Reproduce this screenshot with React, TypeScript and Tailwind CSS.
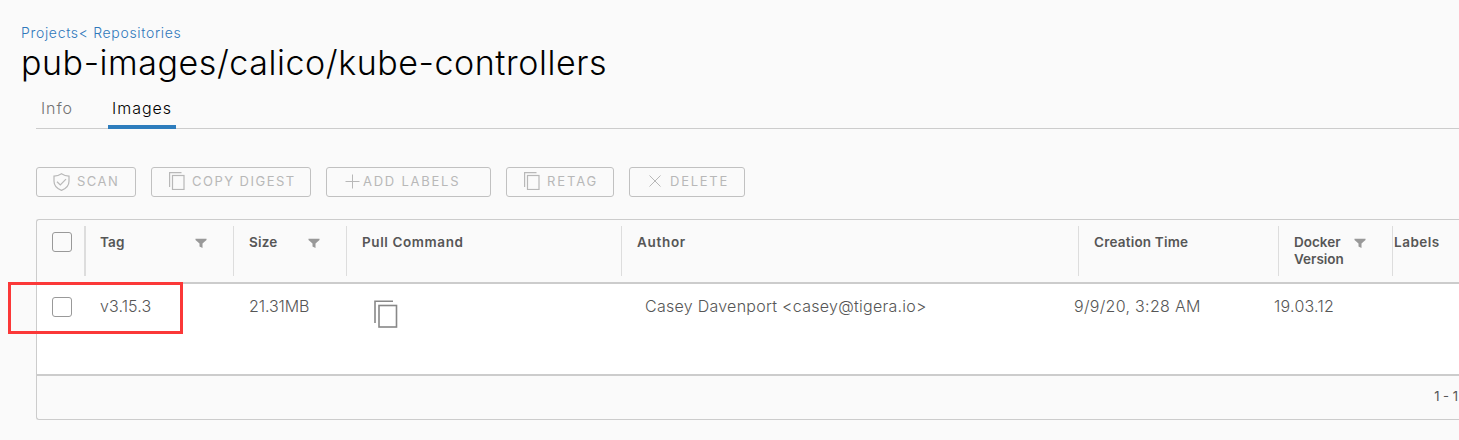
import type { ReactNode } from "react";

function CopyIcon({ className }: { className: string }) {
  return (
    <svg className={className} viewBox="0 0 16 18" fill="none" stroke="currentColor" strokeWidth="1.2">
      <path d="M0.6 15V0.6H12.5" />
      <rect x="3.5" y="3.5" width="11.5" height="14" />
    </svg>
  );
}

function ShieldIcon() {
  return (
    <svg className="-mt-px h-[18px] w-[17px] shrink-0" viewBox="0 0 17 18" fill="none" stroke="currentColor" strokeWidth="1.2">
      <path d="M8.5 0.7C6.3 2.2 3.8 3 1 3.1V8.3C1 12.6 4.2 15.8 8.5 17.4C12.8 15.8 16 12.6 16 8.3V3.1C13.2 3 10.7 2.2 8.5 0.7Z" />
      <path d="M4 8.7L7.3 11.9L13 6.2" />
    </svg>
  );
}

function FilterIcon() {
  return (
    <svg className="mt-[4px] h-[10px] w-[12px] shrink-0" viewBox="0 0 12 10" fill="#999">
      <path d="M0.5 0.8H11.5V1.9L7.5 5.4V10L4.5 8.4V5.4L0.5 1.9Z" />
    </svg>
  );
}

function ToolButton({ className, children }: { className: string; children: ReactNode }) {
  return (
    <button
      className={`flex h-[30px] shrink-0 items-center rounded-[3px] border border-[#c1c1c1] text-[13px] whitespace-nowrap text-[#b8b8b8] ${className}`}
    >
      {children}
    </button>
  );
}

function Checkbox() {
  return <span className="block h-5 w-5 shrink-0 rounded-[3px] border border-[#999]" />;
}

function HeaderCell({ className, children }: { className: string; children?: ReactNode }) {
  return (
    <div className={`flex h-[50px] shrink-0 pt-[8px] text-[13.5px] leading-[17px] font-semibold ${className}`}>
      {children}
    </div>
  );
}

export default function App() {
  return (
    <div className="relative h-[440px] w-full overflow-hidden bg-[#fafafa] font-['Inter',sans-serif] text-[#565656]">
      <nav className="mt-6 flex h-[18px] items-center pl-[21px] text-[14px] leading-[18px] font-light tracking-[0.67px] text-[#2f78bb]">
        <a className="whitespace-pre">Projects&lt; Repositories</a>
      </nav>
      <h1 className="h-[44px] pl-[21px] text-[34px] leading-[42px] font-light tracking-[0.56px] whitespace-nowrap text-black">
        pub-images/calico/kube-controllers
      </h1>
      <div className="ml-9 flex h-[43px] shadow-[inset_0_-1px_0_#ccc]">
        <div className="w-[72px] pt-[10px] pl-[5px] text-[16px] leading-[24px] font-light tracking-[0.9px] text-[#737373]">Info</div>
        <div className="w-[68px] border-b-4 border-[#2d7dbd] pt-[10px] pl-[4px] text-[16px] leading-[24px] font-light tracking-[1px] whitespace-nowrap text-black">
          Images
        </div>
      </div>

      <div className="mt-[38px] ml-9 flex gap-[15px]">
        <ToolButton className="w-[100px] pl-[16px]">
          <ShieldIcon />
          <span className="ml-[7px] tracking-[1.5px]">SCAN</span>
        </ToolButton>
        <ToolButton className="w-[160px] pl-[17px]">
          <CopyIcon className="-mt-[2px] h-[18px] w-4 shrink-0" />
          <span className="ml-[7px] tracking-[1.48px]">COPY DIGEST</span>
        </ToolButton>
        <ToolButton className="w-[165px] pl-[18px]">
          <svg className="-mt-[2px] h-[15px] w-[15px] shrink-0" viewBox="0 0 15 15" stroke="currentColor" fill="none">
            <path d="M7.5 0.5V14.5M0.5 7.5H14.5" />
          </svg>
          <span className="ml-[3px] tracking-[1.75px]">ADD LABELS</span>
        </ToolButton>
        <ToolButton className="w-[108px] pl-[17px]">
          <CopyIcon className="-mt-[2px] h-[18px] w-4 shrink-0" />
          <span className="ml-[7px] tracking-[1.9px]">RETAG</span>
        </ToolButton>
        <ToolButton className="w-[116px] pl-[19px]">
          <svg className="-mt-[2px] h-3 w-3 shrink-0" viewBox="0 0 12 12" stroke="currentColor" fill="none">
            <path d="M0.5 0.5L11.5 11.5M11.5 0.5L0.5 11.5" />
          </svg>
          <span className="ml-[9px] tracking-[1.75px]">DELETE</span>
        </ToolButton>
      </div>

      <div className="mt-[22px] ml-9 h-[201px] overflow-hidden rounded-l-[3px] border border-r-0 border-[#ccc]">
        <div className="flex h-[64px] border-b-2 border-[#ccc] pt-[6px]">
          <HeaderCell className="w-[49px] border-r-2 border-[#ddd] pl-[15px]">
            <div className="-mt-[2px]"><Checkbox /></div>
          </HeaderCell>
          <HeaderCell className="w-[148px] justify-between border-r border-[#ddd] pr-[26px] pl-[14px] tracking-[0.2px]">
            Tag
            <FilterIcon />
          </HeaderCell>
          <HeaderCell className="w-[113px] justify-between border-r border-[#ddd] pr-[26px] pl-[15px] tracking-[0.2px]">
            Size
            <FilterIcon />
          </HeaderCell>
          <HeaderCell className="w-[275px] border-r border-[#ddd] pl-[15px] tracking-[0.6px]">Pull Command</HeaderCell>
          <HeaderCell className="w-[457px] border-r border-[#ddd] pl-[15px] tracking-[0.7px]">Author</HeaderCell>
          <HeaderCell className="w-[200px] border-r border-[#ddd] pl-[15px] tracking-[0.2px]">Creation Time</HeaderCell>
          <HeaderCell className="w-[114px] justify-between border-r border-[#ddd] pr-[26px] pl-[15px]">
            <span>Docker<br />Version</span>
            <FilterIcon />
          </HeaderCell>
          <HeaderCell className="pl-px tracking-[0.5px]">Labels</HeaderCell>
        </div>
        <div className="flex h-[90px] bg-white pt-[13px] text-[16px] leading-[20px] font-light whitespace-nowrap">
          <div className="w-[63px] shrink-0 pl-[15px]"><Checkbox /></div>
          <div className="-mt-px w-[149px] shrink-0 tracking-[0.1px]">v3.15.3</div>
          <div className="-mt-px w-[125px] shrink-0 tracking-[-0.1px]">21.31MB</div>
          <div className="w-[271px] shrink-0 pt-[3px]">
            <svg className="h-7 w-6 text-[#888]" viewBox="0 0 24 28" fill="none" stroke="currentColor" strokeWidth="1.6">
              <path d="M1 23V1.2H19" />
              <rect x="5" y="5.5" width="17.5" height="21.5" />
            </svg>
          </div>
          <div className="-mt-px w-[429px] shrink-0 tracking-[0.27px]">Casey Davenport &lt;casey@tigera.io&gt;</div>
          <div className="-mt-px w-[200px] shrink-0 tracking-[0.3px]">9/9/20, 3:28 AM</div>
          <div className="-mt-px shrink-0 tracking-[0.25px]">19.03.12</div>
        </div>
        <div className="flex h-[45px] items-start justify-end border-t-2 border-[#ccc] pt-[11px] pr-[1px] text-[13px] leading-[18px]">
          1 - 1
        </div>
      </div>

      <div className="absolute top-[282px] left-2 h-[52px] w-[175px] border-3 border-[#fb3838]" />
    </div>
  );
}
